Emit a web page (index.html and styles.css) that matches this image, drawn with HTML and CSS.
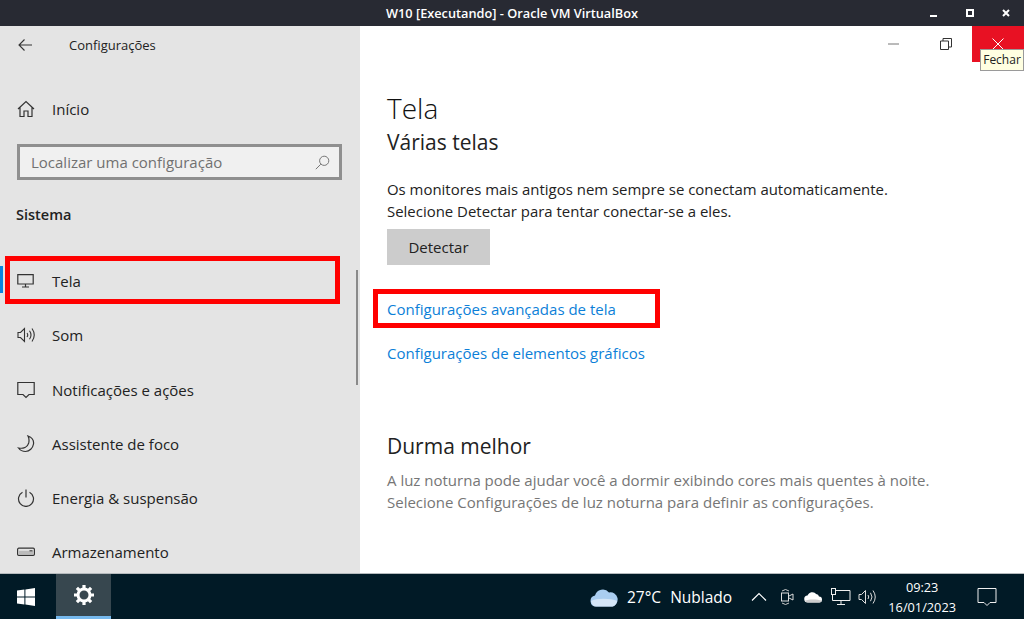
FILE: index.html
```html
<!DOCTYPE html>
<html lang="pt-BR">
<head>
    <meta charset="UTF-8">
    <title>W10 [Executando] - Oracle VM VirtualBox</title>
    <link rel="stylesheet" href="styles.css">
</head>
<body>
    <div class="titlebar">
        <span class="titlebar-text">W10 [Executando] - Oracle VM VirtualBox</span>
        <div class="vm-controls">
            <svg width="8" height="8" viewBox="0 0 8 8"><path d="M0 7h7" stroke="#fff" stroke-width="2"/></svg>
            <svg width="8" height="8" viewBox="0 0 8 8"><rect x="1" y="1" width="6" height="6" fill="none" stroke="#fff" stroke-width="2"/></svg>
            <svg width="8" height="8" viewBox="0 0 8 8"><path d="M1 1l6 6M7 1l-6 6" stroke="#fff" stroke-width="2"/></svg>
        </div>
    </div>

    <div class="window">
        <aside class="sidebar">
            <div class="side-header">
                <svg class="back-icon" width="14" height="12" viewBox="0 0 14 12"><path d="M14 6H1M6.500.5L1 6l5.500 5.500" fill="none" stroke="#333" stroke-width="1.100"/></svg>
                <span>Configurações</span>
            </div>

            <div class="nav-item home-item">
                <svg width="18" height="18" viewBox="0 0 18 18"><path d="M1 9l8-7.500L17 9M3 7.500V16.500H7V11H11V16.500H15V7.500" fill="none" stroke="#333" stroke-width="1.200"/></svg>
                <span>Início</span>
            </div>

            <div class="search-box">
                <span>Localizar uma configuração</span>
                <svg width="15" height="15" viewBox="0 0 15 15"><circle cx="9.200" cy="5.800" r="4.600" fill="none" stroke="#777" stroke-width="1"/><path d="M5.800 9.200L.8 14.200" stroke="#777" stroke-width="1"/></svg>
            </div>

            <div class="side-title">Sistema</div>

            <nav class="nav-list">
                <div class="nav-item active">
                    <svg width="18" height="16" viewBox="0 0 18 16"><path d="M.8 1.600h15.400v9.400H.8zM8.500 11v3M5 14h7" fill="none" stroke="#333" stroke-width="1.200"/></svg>
                    <span>Tela</span>
                </div>
                <div class="nav-item">
                    <svg width="18" height="16" viewBox="0 0 18 16"><path d="M1 5.500h2.500L7.500 1.500v13L3.500 10.500H1zM10 6q1.500 2 0 4M12.500 3.800q3 4.200 0 8.400M15 1.500q4.500 6.500 0 13" fill="none" stroke="#333" stroke-width="1.100"/></svg>
                    <span>Som</span>
                </div>
                <div class="nav-item">
                    <svg width="18" height="18" viewBox="0 0 18 18"><path d="M.8 1.500h16.400v12H12l-3 3-3-3H.8z" fill="none" stroke="#333" stroke-width="1.200"/></svg>
                    <span>Notificações e ações</span>
                </div>
                <div class="nav-item">
                    <svg width="18" height="18" viewBox="0 0 18 18"><path d="M11 1c4 1.500 6 4.500 5.500 8-.6 4-4 7.500-8 7.500-3 0-5.500-1.500-7-3.500 5 1 9-1 10.200-5 .6-2.500.3-5-.7-7z" fill="none" stroke="#333" stroke-width="1.200"/></svg>
                    <span>Assistente de foco</span>
                </div>
                <div class="nav-item">
                    <svg width="18" height="18" viewBox="0 0 18 18"><path d="M5.500 3.300a7.500 7.500 0 1 0 7 0M9 .5v8" fill="none" stroke="#333" stroke-width="1.200"/></svg>
                    <span>Energia &amp; suspensão</span>
                </div>
                <div class="nav-item">
                    <svg width="18" height="16" viewBox="0 0 18 16"><rect x=".6" y="4.200" width="16.800" height="7.200" rx="1.200" fill="none" stroke="#333" stroke-width="1.200"/><path d="M2 6.800h14v3.200H2z" fill="#bbb"/><path d="M12.500 6.800h3" stroke="#333"/></svg>
                    <span>Armazenamento</span>
                </div>
            </nav>

            <div class="active-bar"></div>
            <div class="side-scroll"></div>
            <div class="mark mark-nav"></div>
        </aside>

        <main class="content">
            <div class="win-controls">
                <div class="win-btn"><svg width="14" height="14" viewBox="0 0 14 14"><path d="M1 7h11" stroke="#777" stroke-width="1"/></svg></div>
                <div class="win-btn"><svg width="14" height="14" viewBox="0 0 14 14"><path d="M1.500 4h8v8.500h-8zM4 4V1.500h8.500V10H9.500" fill="none" stroke="#333" stroke-width="1"/></svg></div>
                <div class="win-btn close-btn"><svg width="14" height="14" viewBox="0 0 14 14"><path d="M1.500 1.500l11 11M12.500 1.500l-11 11" stroke="#fff" stroke-width="1"/></svg></div>
            </div>
            <div class="tooltip">Fechar</div>

            <h1>Tela</h1>
            <h2>Várias telas</h2>
            <p class="intro">Os monitores mais antigos nem sempre se conectam automaticamente.<br>Selecione Detectar para tentar conectar-se a eles.</p>
            <div class="btn-detect">Detectar</div>
            <a class="link link-first">Configurações avançadas de tela</a>
            <a class="link">Configurações de elementos gráficos</a>
            <h3>Durma melhor</h3>
            <p class="muted">A luz noturna pode ajudar você a dormir exibindo cores mais quentes à noite.<br>Selecione Configurações de luz noturna para definir as configurações.</p>
            <div class="mark mark-link"></div>
        </main>
    </div>

    <footer class="taskbar">
        <div class="start-btn">
            <svg width="18" height="18" viewBox="0 0 18 18"><path d="M0 2.600L7.400 1.500v7H0zM8.400 1.400L18 0v8.500H8.400zM0 9.500h7.400v7L0 15.400zM8.400 9.500H18V18l-9.600-1.400z" fill="#fff"/></svg>
        </div>
        <div class="task-app">
            <svg width="22" height="22" viewBox="0 0 22 22"><circle cx="11" cy="11" r="6" fill="none" stroke="#fff" stroke-width="3"/><path d="M11 1v4M11 17v4M1 11h4M17 11h4M3.900 3.900l2.800 2.800M15.300 15.300l2.800 2.800M3.900 18.100l2.800-2.800M15.300 6.700l2.800-2.800" stroke="#fff" stroke-width="3.200"/></svg>
        </div>
        <div class="tray">
            <svg class="weather-icon" width="28" height="20" viewBox="0 0 28 20"><path d="M6 19.500a5.500 5.500 0 0 1-1-10.900A8 8 0 0 1 19 5.500a6.800 6.800 0 0 1 3 14z" fill="#a9cdf0"/><path d="M1 14c5-3 20-3 26 0-.5 3-2.500 5.500-5 5.500H6c-2.500 0-4.500-2-5-5.500z" fill="#d5e6f7"/></svg>
            <span class="weather-temp">27°C</span>
            <span class="weather-text">Nublado</span>
            <svg class="tray-chevron" width="16" height="10" viewBox="0 0 16 10"><path d="M1 8.500l7-7 7 7" fill="none" stroke="#fff" stroke-width="1.200"/></svg>
            <svg class="tray-meet" width="15" height="20" viewBox="0 0 15 20"><path d="M2 4Q5.500 1 9 4M2 16q3.500 3 7 0" fill="none" stroke="#ccc"/><rect x="1.500" y="6" width="7" height="8" fill="none" stroke="#ddd"/><path d="M9 9l4-2v6l-4-2" fill="none" stroke="#ddd"/></svg>
            <svg class="tray-cloud" width="19" height="12" viewBox="0 0 19 12"><path d="M4 11.500a3.500 3.500 0 0 1-.5-7A5 5 0 0 1 12 3a3 3 0 0 1 3 2.500 3 3 0 0 1 0 6z" fill="#fff"/><path d="M1 9.500c4-1.500 12-1.500 17 0-.5 1.500-1.500 2-3 2H4c-1.500 0-2.500-.7-3-2z" fill="#ccc"/></svg>
            <svg class="tray-net" width="20" height="18" viewBox="0 0 20 18"><path d="M5 2.500h14v10H1.500V7M10 12.500v4M6 16.500h8" fill="none" stroke="#eee"/><rect x=".5" y=".5" width="4" height="6" fill="#011a26" stroke="#eee"/></svg>
            <svg class="tray-vol" width="18" height="16" viewBox="0 0 18 16"><path d="M1 5.500h2.500L7.500 1.500v13L3.500 10.500H1zM10 6q1.500 2 0 4M12.500 3.800q3 4.200 0 8.400M15 1.500q4.500 6.500 0 13" fill="none" stroke="#ddd"/></svg>
            <div class="clock">
                <div>09:23</div>
                <div>16/01/2023</div>
            </div>
            <svg class="tray-notif" width="20" height="20" viewBox="0 0 20 20"><path d="M1 1.500h18v14h-6l-3 3-3-3H1z" fill="none" stroke="#eee"/></svg>
        </div>
    </footer>
</body>
</html>
```
FILE: styles.css
```css
* {
    margin: 0;
    padding: 0;
    box-sizing: border-box;
}

body {
    width: 1024px;
    height: 619px;
    overflow: hidden;
    display: flex;
    flex-direction: column;
    font-family: 'Open Sans', sans-serif;
    font-size: 15px;
    background: #fff;
}

.titlebar {
    height: 26px;
    background: #282a33;
    color: #fff;
    display: flex;
    align-items: center;
    justify-content: center;
    position: relative;
    font-size: 12.75px;
    font-weight: 600;
    flex-shrink: 0;
}

.vm-controls {
    position: absolute;
    right: 14px;
    top: 9px;
    display: flex;
    gap: 28px;
}

.vm-controls svg {
    display: block;
}

.window {
    height: 547px;
    display: flex;
    flex-shrink: 0;
}

.sidebar {
    width: 360px;
    background: #e4e4e4;
    color: #222;
    position: relative;
    overflow: hidden;
    flex-shrink: 0;
}

.side-header {
    height: 37px;
    display: flex;
    align-items: center;
    padding-left: 18px;
    font-size: 13px;
}

.back-icon {
    margin-right: 37px;
}

.nav-item {
    height: 54px;
    flex-shrink: 0;
    display: flex;
    align-items: center;
    padding-left: 17px;
    font-size: 15px;
    color: #222;
}

.nav-item svg {
    width: 18px;
    margin-right: 17px;
    flex-shrink: 0;
}

.home-item {
    margin-top: 19px;
}

.search-box {
    margin: 8px 18px 0 17px;
    height: 36px;
    border: 3px solid #8f8f8f;
    background: #f0f0f0;
    display: flex;
    align-items: center;
    justify-content: space-between;
    padding: 0 9px 0 11px;
    color: #717171;
    font-size: 15px;
}

.side-title {
    margin: 25px 0 0 16px;
    height: 20px;
    line-height: 20px;
    font-size: 14.5px;
    font-weight: 600;
    color: #222;
}

.nav-list {
    margin-top: 29px;
}

.nav-list .nav-item {
    height: 54.25px;
}

.active-bar {
    position: absolute;
    left: 0;
    top: 240px;
    width: 3px;
    height: 27px;
    background: #0a84e0;
}

.side-scroll {
    position: absolute;
    left: 356px;
    top: 244px;
    width: 2px;
    height: 115px;
    background: #8a8a8a;
}

.mark {
    position: absolute;
    border: 5px solid #ff0000;
}

.mark-nav {
    left: 5px;
    top: 230px;
    width: 335px;
    height: 48px;
}

.content {
    flex: 1;
    position: relative;
    padding: 65px 0 0 27px;
    color: #222;
}

.win-controls {
    position: absolute;
    top: 0;
    right: 0;
    display: flex;
}

.win-btn {
    width: 52px;
    height: 36px;
    display: flex;
    align-items: center;
    justify-content: center;
}

.close-btn {
    background: #e81123;
}

.tooltip {
    position: absolute;
    left: 620px;
    top: 23px;
    width: 44px;
    height: 22px;
    border: 1px solid #9a9a9a;
    background: #ffffe1;
    font-size: 12px;
    line-height: 20px;
    text-align: center;
    color: #222;
}

h1 {
    font-size: 28px;
    font-weight: 300;
    line-height: 34px;
    color: #111;
}

h2 {
    font-size: 21px;
    font-weight: 400;
    line-height: 19px;
    color: #222;
    margin-top: 8px;
}

.intro {
    margin-top: 26px;
    line-height: 22px;
    font-size: 14.95px;
}

.btn-detect {
    width: 103px;
    height: 36px;
    margin-top: 7px;
    background: #ccc;
    display: flex;
    align-items: center;
    justify-content: center;
}

.link {
    display: block;
    color: #0c7fd8;
    line-height: 20px;
    margin-top: 24px;
}

.link-first {
    margin-top: 34px;
}

h3 {
    font-size: 21px;
    font-weight: 400;
    line-height: 26px;
    margin-top: 70px;
    color: #222;
}

.muted {
    color: #767676;
    margin-top: 10px;
    line-height: 22px;
}

.mark-link {
    left: 13px;
    top: 263px;
    width: 287px;
    height: 39px;
}

.taskbar {
    height: 46px;
    background: #011a26;
    border-top: 1px solid #b5babd;
    display: flex;
    align-items: stretch;
    color: #fff;
}

.start-btn {
    width: 56px;
    display: flex;
    align-items: center;
    padding-left: 17px;
}

.task-app {
    width: 55px;
    background: #37474f;
    border-bottom: 3px solid #76b9ed;
    display: flex;
    align-items: center;
    justify-content: center;
}

.tray {
    flex: 1;
    display: flex;
    align-items: center;
    padding-left: 479px;
    font-size: 15.5px;
}

.weather-temp {
    margin-left: 9px;
}

.weather-text {
    margin-left: 9px;
}

.tray-chevron {
    margin-left: 19px;
}

.tray-meet {
    margin-left: 13px;
}

.tray-cloud {
    margin-left: 9px;
}

.tray-net {
    margin-left: 8px;
}

.tray-vol {
    margin-left: 7px;
}

.clock {
    margin-left: 10px;
    width: 72px;
    text-align: center;
    font-size: 12.75px;
    line-height: 20px;
}

.tray-notif {
    margin-left: 19px;
}
```
